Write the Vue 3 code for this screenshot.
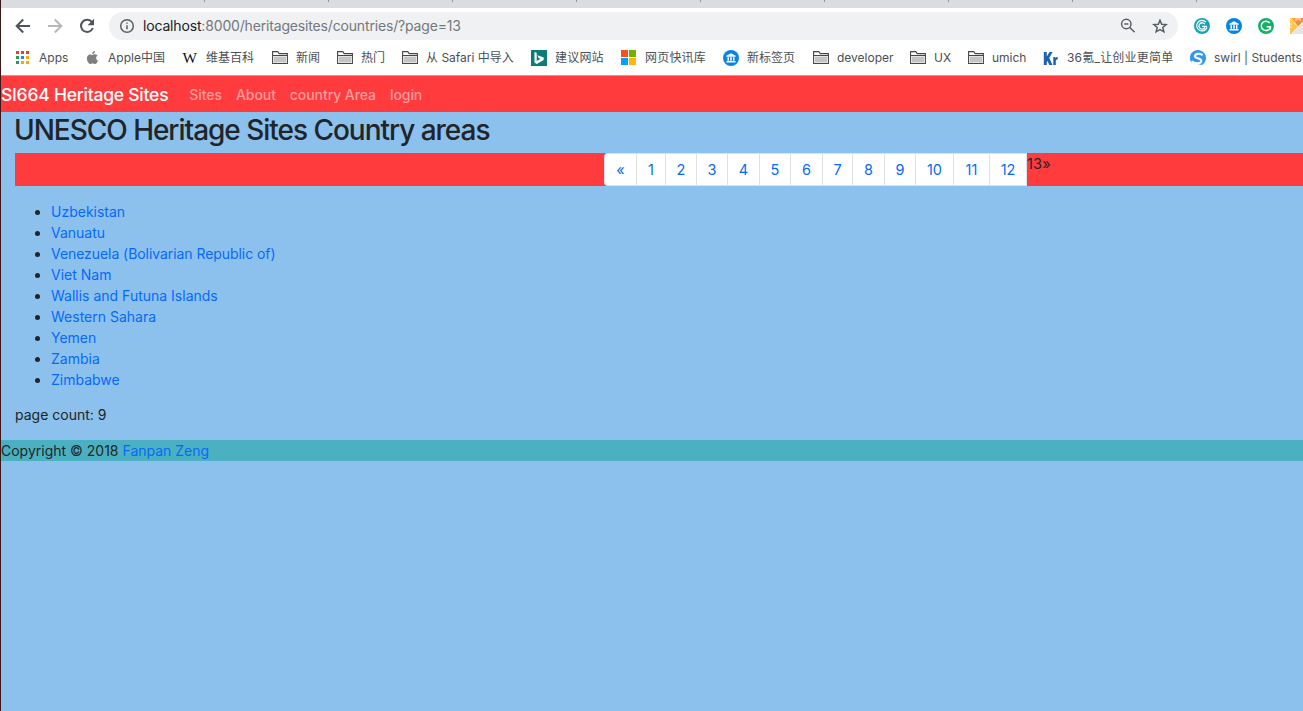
<script setup>
const bookmarks = [
  { icon: 'apps', text: 'Apps', width: 69 },
  { icon: 'apple', text: 'Apple中国', width: 98 },
  { icon: 'wiki', text: '维基百科', width: 90 },
  { icon: 'folder', text: '新闻', width: 65 },
  { icon: 'folder', text: '热门', width: 65 },
  { icon: 'folder', text: '从 Safari 中导入', width: 129 },
  { icon: 'bing', text: '建议网站', width: 90 },
  { icon: 'windows', text: '网页快讯库', width: 102 },
  { icon: 'museum', text: '新标签页', width: 90 },
  { icon: 'folder', text: 'developer', width: 97 },
  { icon: 'folder', text: 'UX', width: 58 },
  { icon: 'folder', text: 'umich', width: 75 },
  { icon: 'kr', text: '36氪_让创业更简单', width: 147 },
  { icon: 'swirl', text: 'swirl | Students', width: 113 },
]
const appColors = ['#ea3c32', '#ea3c32', '#ea3c32', '#2d9a50', '#2b83f0', '#f9a80c', '#2d9a50', '#f9a80c', '#f9a80c']
const navLinks = ['Sites', 'About', 'country Area', 'login']
const pages = [
  ['«', 32], ['1', 29], ['2', 31], ['3', 31], ['4', 32], ['5', 31], ['6', 32],
  ['7', 30], ['8', 32], ['9', 31], ['10', 38], ['11', 36], ['12', 37],
]
const countries = [
  'Uzbekistan', 'Vanuatu', 'Venezuela (Bolivarian Republic of)', 'Viet Nam',
  'Wallis and Futuna Islands', 'Western Sahara', 'Yemen', 'Zambia', 'Zimbabwe',
]
</script>

<template>
  <div class="window">
    <header class="chrome">
      <div class="tabs"><i v-for="n in 9" :key="n"></i></div>
      <div class="toolbar">
        <svg class="arrow" viewBox="0 0 16 16"><path d="M15 8H2M8.2 1.500 1.700 8l6.500 6.500" /></svg>
        <svg class="arrow off" viewBox="0 0 16 16"><path d="M1 8h13M7.800 1.500 14.300 8l-6.500 6.500" /></svg>
        <svg class="reload" viewBox="0 0 16 16"><path class="line" d="M13 4.200A6.100 6.100 0 1 0 13.800 10" /><path class="fill" d="M15 .8v6.400H8.600z" /></svg>
        <div class="omnibox">
          <svg class="info" viewBox="0 0 16 16"><circle cx="8" cy="8" r="6.300" /><path d="M8 7.200v4M8 4.400v1.400" /></svg>
          <span class="url"><b>localhost</b>:8000/heritagesites/countries/?page=13</span>
          <svg class="lens" viewBox="0 0 16 16"><circle cx="6.300" cy="6" r="4.700" /><path d="M9.800 9.500 14.600 14.300M4.200 6h4.200" /></svg>
          <svg class="star" viewBox="0 0 16 16"><path d="m8 2.200 1.700 4 4.500.4-3.400 2.900 1.100 4.300L8 11.500l-3.900 2.300 1.100-4.300-3.400-2.900 4.500-.4z" /></svg>
        </div>
        <svg class="ext" viewBox="0 0 16 16"><circle cx="8" cy="8" r="8" fill="#15a3b8" /><path d="M12 4.200A5.300 5.300 0 1 0 13 9.300" fill="none" stroke="#fff" stroke-width="1.200" /><path d="M10.800 6.200A3.200 3.200 0 1 0 11 9.400M8 8.300h5" fill="none" stroke="#fff" stroke-width="1.300" /></svg>
        <svg class="ext" viewBox="0 0 16 16"><circle cx="8" cy="8" r="8" fill="#0984e3" /><path d="M3.300 5.800 8 3.200l4.700 2.600v.9H3.300zM4.500 7.200H6v3.600H4.500zm2.700 0h1.600v3.600H7.200zm2.800 0h1.500v3.600H10zM3.500 11h9v1.400h-9z" fill="#fff" /></svg>
        <svg class="ext" viewBox="0 0 16 16"><circle cx="8" cy="8" r="8" fill="#15b067" /><path d="M11.700 5A4.700 4.700 0 1 0 12.400 9.500M8.600 8.700h3.800v3" fill="none" stroke="#fff" stroke-width="1.500" /></svg>
        <svg class="ext" viewBox="0 0 16 16"><path d="M0 0h16v16H0z" fill="#e5e5e5" /><path d="M0 0h16L1.500 16H0z" fill="#ffc34d" /><path d="M3 0h13L8 8.500z" fill="#f58a35" /><path d="m0 1 7.500 7.200M16 .5 1.500 16M6 0v3m2-3v2m2-2v3M0 6h2M0 9h2" fill="none" stroke="#fff3d5" /></svg>
      </div>
      <div class="bookmarks">
        <div v-for="b in bookmarks" :key="b.text" class="bookmark" :style="{ width: b.width + 'px' }">
          <svg class="mark" viewBox="0 0 16 16">
            <template v-if="b.icon === 'apps'">
              <rect v-for="(c, i) in appColors" :key="i" :x="1 + (i % 3) * 5" :y="1 + Math.floor(i / 3) * 5" width="3" height="3" :fill="c" />
            </template>
            <path v-else-if="b.icon === 'apple'" fill="#808080" d="M11 1c.1 1.700-1.200 3.200-2.800 3.100C8 2.500 9.400 1.100 11 1zM8.400 5c.7 0 1.500-.8 2.800-.7 1 .1 1.900.5 2.400 1.300-2.100 1.300-1.800 4.200.4 5.100-.5 1.400-1.700 3.300-2.900 3.300-.9 0-1.300-.6-2.500-.6s-1.600.6-2.400.6C4.600 14 2.900 10.900 2.900 8.300c0-2.500 1.600-3.900 3.200-3.900 1 0 1.800.6 2.300.6z" />
            <text v-else-if="b.icon === 'wiki'" x="0.500" y="12.500" class="wiki" textLength="14.500" lengthAdjust="spacingAndGlyphs">W</text>
            <template v-else-if="b.icon === 'folder'">
              <path d="M.6 13.500V1.600h5.200l1.400 2h8.200v9.900z" fill="#fff" stroke="#454545" stroke-width="1.100" />
              <path d="M2 6.500h12v6H2z" fill="#c4c4c4" /><path d="M1 5.500h14" stroke="#454545" />
            </template>
            <template v-else-if="b.icon === 'bing'">
              <path d="M0 0h16v16H0z" fill="#0c7d76" /><path d="m3.500 2 2.200.8v8.200l3.800-2.100-1.900-.9-1.200-2.700 6.300 2.100v2.500l-7 4.100-2.200-1.500z" fill="#fff" />
            </template>
            <template v-else-if="b.icon === 'windows'">
              <path d="M0 0h7v7H0z" fill="#f4511e" /><path d="M8 0h7v7H8z" fill="#73b100" /><path d="M0 8h7v7H0z" fill="#03a1f1" /><path d="M8 8h7v7H8z" fill="#ffb605" />
            </template>
            <template v-else-if="b.icon === 'museum'">
              <circle cx="8" cy="8" r="8" fill="#0984e3" /><path d="M3.300 5.800 8 3.200l4.700 2.600v.9H3.300zM4.500 7.200H6v3.600H4.500zm2.700 0h1.600v3.600H7.200zm2.800 0h1.500v3.600H10zM3.500 11h9v1.400h-9z" fill="#fff" />
            </template>
            <path v-else-if="b.icon === 'kr'" fill="#1e63b0" d="M.8 2h3v4.600L6.500 2H9.600L6.300 8 9.500 15H6.300L4.500 10.900l-.7 1.200V15h-3zM10.300 7h2v1.200c.5-.9 1.300-1.200 2.400-1.200v2.600c-1.300 0-1.900.5-1.900 1.800V15h-2.500z" />
            <template v-else>
              <path d="M1.500 12.700A8 8 0 1 1 12 14.900z" fill="#2c99f2" /><path d="M12.500 5.200C9.800 2.700 5 3.800 5 6.200c0 2.600 6.300 1.500 6.300 4.600 0 2.700-5.300 3.500-9.800.6" fill="none" stroke="#fff" stroke-width="2.200" />
            </template>
          </svg>
          <span :class="{ cjk: b.icon === 'kr' || b.icon === 'bing' || b.icon === 'windows' }">{{ b.text }}</span>
        </div>
      </div>
    </header>

    <nav class="navbar">
      <a class="brand">SI664 Heritage Sites</a>
      <a v-for="l in navLinks" :key="l">{{ l }}</a>
    </nav>

    <main>
      <h2>UNESCO Heritage Sites Country areas</h2>
      <div class="pagination">
        <div class="pages">
          <a v-for="p in pages" :key="p[0]" :style="{ width: p[1] + 'px' }">{{ p[0] }}</a>
        </div>
        <span class="current">13»</span>
      </div>
      <ul>
        <li v-for="c in countries" :key="c"><a>{{ c }}</a></li>
      </ul>
      <p>page count: 9</p>
    </main>

    <footer>Copyright © 2018 <a>Fanpan Zeng</a></footer>
  </div>
</template>

<style>
body { margin: 0; overflow: hidden; }
</style>

<style scoped>
* { box-sizing: border-box; }
.window {
  height: 711px;
  overflow: hidden;
  border-left: 1px solid #3b1717;
  background: #8bc1ec;
  color: #212529;
  font: 14px/21px Inter, "Noto Sans CJK SC", sans-serif;
}
.chrome { height: 76px; background: #fff; border-bottom: 1px solid #aaa; }
.tabs { height: 8px; background: #d9dce0; display: flex; padding-left: 203px; gap: 123px; }
.tabs i { flex: none; width: 1px; height: 2px; background: #92969b; }
.toolbar { height: 36px; display: flex; align-items: center; padding-left: 14px; width: 1310px; }
.toolbar svg { flex: none; width: 16px; height: 16px; }
.arrow { fill: none; stroke: #50545a; stroke-width: 2; margin-right: 16px; }
.off { stroke: #b5b7ba; }
.reload .line { fill: none; stroke: #50545a; stroke-width: 2; }
.reload .fill { fill: #50545a; }
.omnibox {
  margin-left: 14px; width: 1069px; height: 28px; border-radius: 14px; background: #eff1f3;
  display: flex; align-items: center; padding: 0 10px; margin-right: 16px; flex: none;
}
.info, .lens, .star { fill: none; stroke: #5b5f64; stroke-width: 1.5; }
.url { margin-left: 8px; flex: 1; color: #74787d; white-space: nowrap; letter-spacing: -0.165px; padding-bottom: 2px; }
.url b { font-weight: 400; color: #202124; }
.lens { margin-right: 16px; }
.toolbar .ext { margin-right: 16px; }
.bookmarks { display: flex; padding: 3px 0 0 14px; width: 1330px; height: 30px; }
.bookmark { flex: none; display: flex; align-items: center; height: 22px; font-size: 12px; color: #4c4f54; white-space: nowrap; }
.bookmark span { padding-bottom: 1px; }
.cjk { letter-spacing: 0.2px; }
.mark { width: 16px; height: 16px; margin-right: 8px; flex: none; }
.wiki { font: 14.5px "Liberation Serif", serif; fill: #111; }
.navbar { height: 36px; background: #ff3b3e; display: flex; align-items: center; gap: 14px; }
.navbar a { color: #ff9d9e; font-weight: 500; letter-spacing: -0.07px; }
.navbar .brand { color: #fff; font-size: 17.5px; margin-right: 7px; letter-spacing: -0.23px; }
main { padding-left: 14px; }
h2 { margin: 0 0 0 -1px; height: 41px; font-size: 28px; font-weight: 500; line-height: 36px; letter-spacing: -1.03px; }
.pagination { height: 33px; background: #ff3b3e; display: flex; padding-left: 589px; }
.pages { display: flex; background: #fff; border: 1px solid #dee2e6; border-right: 0; border-radius: 4px 0 0 4px; }
.pages a { border-right: 1px solid #dee2e6; text-align: center; line-height: 32px; font-size: 14.5px; }
.current { font-size: 14.5px; letter-spacing: 0.2px; }
a { color: #0769fc; }
ul { margin: 15px 0 14px; padding-left: 36px; }
li:nth-child(3) a { letter-spacing: -0.06px; }
p { margin: 0 0 15px; }
footer { height: 21px; background: #4bb1c2; }
</style>
